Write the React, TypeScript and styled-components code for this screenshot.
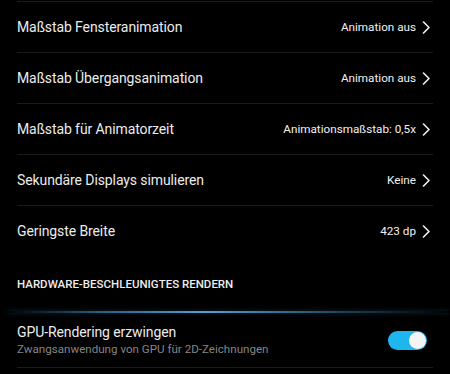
import React from 'react';
import styled, { createGlobalStyle } from 'styled-components';

const GlobalStyle = createGlobalStyle`
  html, body {
    margin: 0;
    padding: 0;
    background: #000;
    font-family: Roboto, "Noto Sans", sans-serif;
    -webkit-font-smoothing: antialiased;
  }
`;

const Screen = styled.div`
  width: 450px;
  height: 374px;
  overflow: hidden;
  background: #000;
  padding-top: 1px;
  box-sizing: border-box;
`;

const List = styled.div`
  margin: 0 17px;
  border-top: 1px solid #1b1b1b;
`;

const Row = styled.div<{ $last?: boolean }>`
  display: flex;
  align-items: center;
  justify-content: space-between;
  height: 50px;
  border-bottom: 1px solid ${(p) => (p.$last ? 'transparent' : '#1b1b1b')};
`;

const Title = styled.span`
  color: #ececec;
  font-size: 14px;
  letter-spacing: -0.1px;
`;

const Value = styled.span`
  display: flex;
  align-items: center;
  gap: 6px;
  color: #f2f2f2;
  font-size: 11.7px;
  margin-right: 3px;
`;

const SectionHeader = styled.div`
  height: 54px;
  display: flex;
  align-items: center;
  padding: 0 17px;
  color: #ededed;
  font-size: 11.5px;
  font-weight: 500;
`;

const GlowLine = styled.div`
  height: 2px;
  margin-left: 6px;
  background: linear-gradient(
    90deg,
    rgba(60, 140, 190, 0) 0%,
    rgba(70, 150, 200, 0.6) 20%,
    rgba(90, 170, 220, 0.95) 45%,
    rgba(70, 150, 200, 0.4) 78%,
    rgba(60, 140, 190, 0) 100%
  );
  box-shadow: 0 0 4px rgba(60, 150, 210, 0.3);
`;

const SwitchRow = styled.div`
  margin: 0 17px;
  height: 54px;
  display: flex;
  align-items: center;
  justify-content: space-between;
  border-bottom: 1px solid #1b1b1b;
`;

const TextBlock = styled.div`
  display: flex;
  flex-direction: column;
  gap: 2px;
`;

const Subtitle = styled.span`
  color: #858585;
  font-size: 11.6px;
`;

const Toggle = styled.div<{ $on: boolean }>`
  width: 39px;
  height: 19px;
  border-radius: 10px;
  background: ${(p) => (p.$on ? '#1eb6ee' : '#555')};
  position: relative;
  margin-right: 6px;
  margin-top: 1px;
`;

const Knob = styled.div<{ $on: boolean }>`
  position: absolute;
  top: 1px;
  ${(p) => (p.$on ? 'right: 1px;' : 'left: 1px;')}
  width: 17px;
  height: 17px;
  border-radius: 50%;
  background: #f4f4f4;
`;

const Chevron = () => (
  <svg width="8" height="13" viewBox="0 0 8 13">
    <path d="M1.5 1l5.5 5.5-5.5 5.5" fill="none" stroke="#f2f2f2" strokeWidth="1.6" strokeLinecap="round" strokeLinejoin="round" />
  </svg>
);

const rows = [
  { title: 'Maßstab Fensteranimation', value: 'Animation aus' },
  { title: 'Maßstab Übergangsanimation', value: 'Animation aus' },
  { title: 'Maßstab für Animatorzeit', value: 'Animationsmaßstab: 0,5x' },
  { title: 'Sekundäre Displays simulieren', value: 'Keine' },
  { title: 'Geringste Breite', value: '423 dp' },
];

export default function App() {
  return (
    <>
      <GlobalStyle />
      <Screen>
        <List>
          {rows.map((r, i) => (
            <Row key={r.title} $last={i === rows.length - 1}>
              <Title>{r.title}</Title>
              <Value>
                {r.value}
                <Chevron />
              </Value>
            </Row>
          ))}
        </List>
        <SectionHeader>HARDWARE-BESCHLEUNIGTES RENDERN</SectionHeader>
        <GlowLine />
        <SwitchRow>
          <TextBlock>
            <Title>GPU-Rendering erzwingen</Title>
            <Subtitle>Zwangsanwendung von GPU für 2D-Zeichnungen</Subtitle>
          </TextBlock>
          <Toggle $on>
            <Knob $on />
          </Toggle>
        </SwitchRow>
      </Screen>
    </>
  );
}
